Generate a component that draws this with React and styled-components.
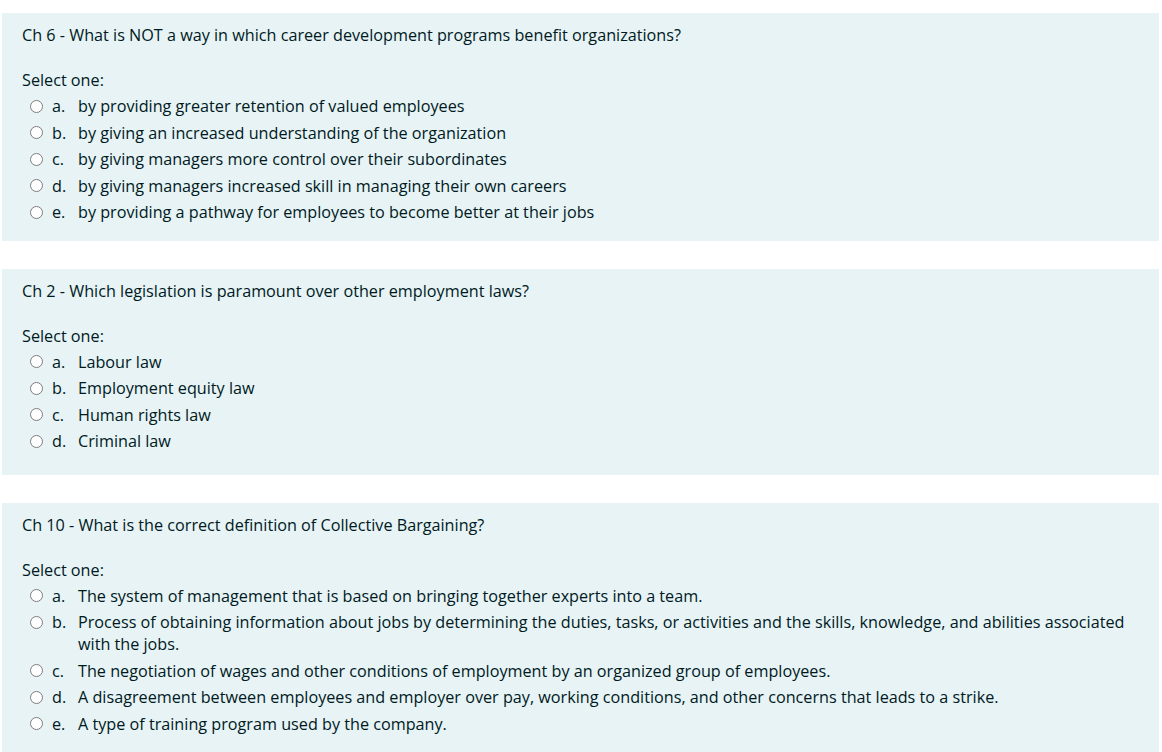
import styled, { createGlobalStyle } from "styled-components";

const questions = [
	{
		id: 1,
		title: "Ch 6 - What is NOT a way in which career development programs benefit organizations?",
		tail: 15,
		answers: [
			"by providing greater retention of valued employees",
			"by giving an increased understanding of the organization",
			"by giving managers more control over their subordinates",
			"by giving managers increased skill in managing their own careers",
			"by providing a pathway for employees to become better at their jobs",
		],
	},
	{
		id: 2,
		title: "Ch 2 - Which legislation is paramount over other employment laws?",
		tail: 20,
		answers: ["Labour law", "Employment equity law", "Human rights law", "Criminal law"],
	},
	{
		id: 3,
		title: "Ch 10 - What is the correct definition of Collective Bargaining?",
		tail: 15,
		answers: [
			"The system of management that is based on bringing together experts into a team.",
			"Process of obtaining information about jobs by determining the duties, tasks, or activities and the skills, knowledge, and abilities associated with the jobs.",
			"The negotiation of wages and other conditions of employment by an organized group of employees.",
			"A disagreement between employees and employer over pay, working conditions, and other concerns that leads to a strike.",
			"A type of training program used by the company.",
		],
	},
];

const letters = ["a", "b", "c", "d", "e"];

const App = () => {
	return (
		<>
			<GlobalStyle />
			<Page>
				{questions.map((q) => (
					<Card key={q.id} $tail={q.tail}>
						<Title>{q.title}</Title>
						<Prompt>Select one:</Prompt>
						<AnswerList>
							{q.answers.map((text, i) => (
								<Answer key={i}>
									<Radio type="radio" name={`q${q.id}`} />
									<Letter>{letters[i]}.</Letter>
									<AnswerText>{text}</AnswerText>
								</Answer>
							))}
						</AnswerList>
					</Card>
				))}
			</Page>
		</>
	);
};

export default App;

const GlobalStyle = createGlobalStyle`
	body {
		margin: 0;
		background: #fff;
		font-family: "Open Sans", "DejaVu Sans", sans-serif;
		color: #1d2125;
	}
`;

const Page = styled.main`
	display: flex;
	flex-direction: column;
	gap: 28px;
	padding: 13px 3px 0 2px;
	height: 752px;
	overflow: hidden;
	box-sizing: border-box;
`;

const Card = styled.section`
	background-color: #e7f3f5;
	padding: 11px 20px ${(p) => p.$tail}px 20px;
	flex-shrink: 0;
`;

const Title = styled.p`
	margin: 0 0 23px;
	font-size: 16.2px;
	line-height: 22px;
	color: #001a1e;
`;

const Prompt = styled.p`
	margin: 0 0 2px;
	font-size: 16.2px;
	line-height: 22px;
	color: #001a1e;
`;

const AnswerList = styled.div`
	display: flex;
	flex-direction: column;
`;

const Answer = styled.label`
	display: flex;
	align-items: flex-start;
	padding: 2.25px 0 2.25px 8px;
	font-size: 16.2px;
	line-height: 22px;
	color: #001a1e;
`;

const Radio = styled.input`
	appearance: none;
	width: 13px;
	height: 13px;
	margin: 4.5px 9px 0 0;
	border: 1.5px solid #7d7d7d;
	border-radius: 50%;
	background: #fff;
	flex-shrink: 0;
	box-sizing: border-box;
`;

const Letter = styled.span`
	width: 26px;
	flex-shrink: 0;
`;

const AnswerText = styled.span`
	flex: 1;
`;
